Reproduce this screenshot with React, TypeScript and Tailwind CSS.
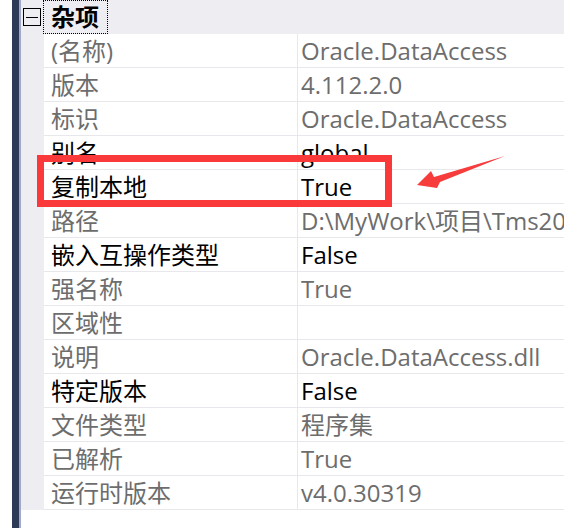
import React from "react";

type Row = { k: string; v: string; dark?: boolean };

const rows: Row[] = [
  { k: "(名称)", v: "Oracle.DataAccess" },
  { k: "版本", v: "4.112.2.0" },
  { k: "标识", v: "Oracle.DataAccess" },
  { k: "别名", v: "global", dark: true },
  { k: "复制本地", v: "True", dark: true },
  { k: "路径", v: "D:\\MyWork\\项目\\Tms2017\\Lib\\Oracle.DataAccess.dll" },
  { k: "嵌入互操作类型", v: "False", dark: true },
  { k: "强名称", v: "True" },
  { k: "区域性", v: "" },
  { k: "说明", v: "Oracle.DataAccess.dll" },
  { k: "特定版本", v: "False", dark: true },
  { k: "文件类型", v: "程序集" },
  { k: "已解析", v: "True" },
  { k: "运行时版本", v: "v4.0.30319" },
];

export default function App() {
  return (
    <div
      className="relative w-[564px] h-[528px] overflow-hidden bg-white flex"
      style={{ fontFamily: '"Open Sans", "Noto Sans CJK SC", sans-serif' }}
    >
      <div className="w-[12px] shrink-0 bg-white" />
      <div className="w-[7px] shrink-0 bg-[#2c3a58]" />
      <div className="w-[2px] shrink-0 bg-[#a3a8c9]" />
      <div className="flex-1 flex flex-col min-w-0">
        <div className="h-[34px] shrink-0 bg-[#eeeef2] flex items-center">
          <div className="w-[2px]" />
          <div className="w-[18px] h-[18px] border border-black flex items-center justify-center">
            <div className="w-[12px] h-[1px] bg-black" />
          </div>
          <div className="w-[2px]" />
          <div className="h-[34px] w-[65px] border border-dotted border-black flex items-center pl-[7px]">
            <span className="text-[24px] leading-none font-bold text-black">杂项</span>
          </div>
        </div>
        {rows.map((r, i) => (
          <div key={i} className="h-[34px] shrink-0 flex">
            <div className="w-[23px] shrink-0 bg-[#eeeef2]" />
            <div className="w-[254px] shrink-0 border-b border-r border-[#e8e8ec] flex items-center pl-[7px] overflow-hidden">
              <span
                className={`text-[24px] leading-none whitespace-nowrap ${
                  r.dark ? "text-black" : "text-[#6d6d6d]"
                }`}
              >
                {r.k}
              </span>
            </div>
            <div className="flex-1 min-w-0 border-b border-[#e8e8ec] flex items-center pl-[3px] overflow-hidden">
              <span
                className={`text-[24px] leading-none whitespace-nowrap ${
                  r.dark ? "text-black" : "text-[#6d6d6d]"
                }`}
              >
                {r.v}
              </span>
            </div>
          </div>
        ))}
        <div className="flex-1 bg-white" />
      </div>

      <div className="absolute left-[37px] top-[155px] w-[355px] h-[52px] border-[7px] border-[#fa3a3a]" />
      <svg className="absolute left-0 top-0" width="564" height="528" viewBox="0 0 564 528">
        <polygon
          points="417,185 431,171 434,177 505,156 440,182 437,188"
          fill="#f73c3c"
        />
      </svg>
    </div>
  );
}
